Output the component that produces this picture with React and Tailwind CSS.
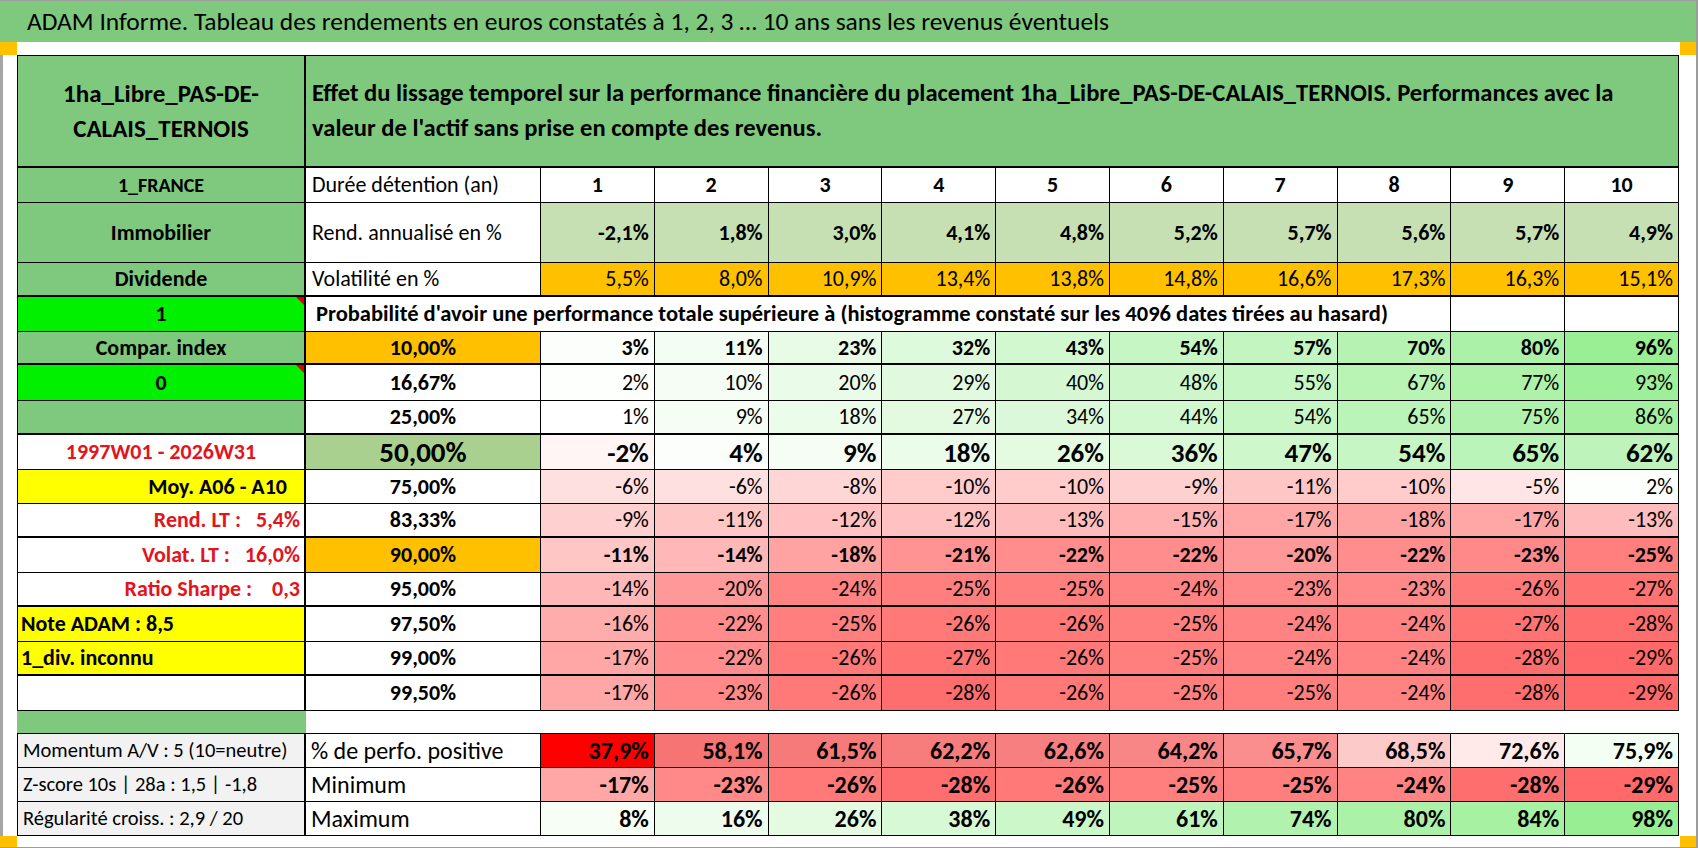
import React from 'react'

const probRows = [
  { p: '10,00%', pBg: 'bg-[#ffc000]', vals: [3, 11, 23, 32, 43, 54, 57, 70, 80, 96], kind: 'bold', thick: true },
  { p: '16,67%', vals: [2, 10, 20, 29, 40, 48, 55, 67, 77, 93] },
  { p: '25,00%', vals: [1, 9, 18, 27, 34, 44, 54, 65, 75, 86], thick: true },
  { p: '50,00%', pBg: 'bg-[#a9d08e]', vals: [-2, 4, 9, 18, 26, 36, 47, 54, 65, 62], kind: 'big' },
  { p: '75,00%', vals: [-6, -6, -8, -10, -10, -9, -11, -10, -5, 2] },
  { p: '83,33%', vals: [-9, -11, -12, -12, -13, -15, -17, -18, -17, -13], thick: true },
  { p: '90,00%', pBg: 'bg-[#ffc000]', vals: [-11, -14, -18, -21, -22, -22, -20, -22, -23, -25], kind: 'bold' },
  { p: '95,00%', vals: [-14, -20, -24, -25, -25, -24, -23, -23, -26, -27], thick: true },
  { p: '97,50%', vals: [-16, -22, -25, -26, -26, -25, -24, -24, -27, -28] },
  { p: '99,00%', vals: [-17, -22, -26, -27, -26, -25, -24, -24, -28, -29], thick: true },
  { p: '99,50%', vals: [-17, -23, -26, -28, -26, -25, -25, -24, -28, -29] },
]

// left column next to the probability rows
const sideCells = [
  { text: 'Compar. index', cls: 'bg-[#7fc97e] justify-center font-bold' },
  { text: '0', cls: 'bg-[#00f000] justify-center font-bold', flag: true },
  { text: '', cls: 'bg-[#7fc97e]' },
  { text: '1997W01 - 2026W31', cls: 'bg-white justify-center font-bold text-[#e3141c]' },
  { text: 'Moy. A06 - A10', cls: 'bg-[#ffff00] justify-end pr-[17px] font-bold' },
  { text: 'Rend. LT :   5,4%', cls: 'bg-white justify-end pr-[4px] font-bold text-[#e3141c]' },
  { text: 'Volat. LT :   16,0%', cls: 'bg-white justify-end pr-[4px] font-bold text-[#e3141c]' },
  { text: 'Ratio Sharpe :    0,3', cls: 'bg-white justify-end pr-[4px] font-bold text-[#e3141c]' },
  { text: 'Note ADAM : 8,5', cls: 'bg-[#ffff00] justify-start pl-[3px] font-bold' },
  { text: '1_div. inconnu', cls: 'bg-[#ffff00] justify-start pl-[3px] font-bold' },
  { text: '', cls: 'bg-white' },
]

const rendAnn = ['-2,1%', '1,8%', '3,0%', '4,1%', '4,8%', '5,2%', '5,7%', '5,6%', '5,7%', '4,9%']
const vola = ['5,5%', '8,0%', '10,9%', '13,4%', '13,8%', '14,8%', '16,6%', '17,3%', '16,3%', '15,1%']

const positive = [
  ['37,9%', '#ff0000'],
  ['58,1%', '#f67474'],
  ['61,5%', '#f77a7a'],
  ['62,2%', '#f77c7c'],
  ['62,6%', '#f87f7f'],
  ['64,2%', '#f98686'],
  ['65,7%', '#fa8e8e'],
  ['68,5%', '#fdcaca'],
  ['72,6%', '#ffe9e9'],
  ['75,9%', '#f3fff3'],
]
const minimum = [-17, -23, -26, -28, -26, -25, -25, -24, -28, -29]
const maximum = [8, 16, 26, 38, 49, 61, 74, 80, 84, 98]

function scale(v) {
  if (v >= 0) {
    const t = Math.min(v / 100, 1)
    return `rgb(${Math.round(255 - 105 * t)},${Math.round(255 - 17 * t)},${Math.round(255 - 110 * t)})`
  }
  const t = Math.min(-v / 29, 1)
  const c = Math.round(255 - 150 * t)
  return `rgb(255,${c},${c})`
}

function Cell({ className = '', style, children }) {
  return (
    <div
      className={`relative flex items-center overflow-hidden whitespace-pre border-black ${className}`}
      style={style}
    >
      {children}
    </div>
  )
}

function Flag() {
  return (
    <span className="absolute top-0 right-0 w-0 h-0 border-l-[8px] border-l-transparent border-t-[8px] border-t-[#e00000]" />
  )
}

export default function App() {
  return (
    <div className="w-[1698px] h-[848px] bg-white text-black overflow-hidden flex flex-col border-t border-r-2 border-[#9c9c9c] font-['Carlito','DejaVu_Sans_Condensed','Liberation_Sans',sans-serif]">
      {/* Title band */}
      <div className="h-[41px] shrink-0 bg-[#7fc97e] pl-[27px] flex items-center text-[25.5px] leading-none">
        ADAM Informe. Tableau des rendements en euros constatés à 1, 2, 3 … 10 ans sans les revenus éventuels
      </div>
      <div className="h-[13px] shrink-0 flex justify-between">
        <div className="w-[17px] bg-[#ffc000]" />
        <div className="w-[16px] bg-[#ffc000]" />
      </div>

      <div className="flex h-[781px] shrink-0">
        <div className="w-[17px] shrink-0 border-l-[3px] border-[#a6a6a6]" />
        <div className="w-[1662px] shrink-0 grid grid-cols-[289px_235px_repeat(10,minmax(0,1fr))] grid-rows-[113px_35px_60px_34px_35px_33px_36px_34px_35px_34px_34px_35px_34px_35px_34px_35px_22px_35px_34px_34px] text-[22px] leading-none">
          {/* Header */}
          <Cell className="border-l border-t border-r-2 border-b-2 bg-[#7fc97e] justify-center text-center text-[25px] font-bold leading-[35px] whitespace-normal">
            <span>
              1ha_Libre_PAS-DE-
              <br />
              CALAIS_TERNOIS
            </span>
          </Cell>
          <Cell className="col-span-11 border-t border-r border-b-2 bg-[#7fc97e] pl-[6px] text-[24.6px] font-bold leading-[35px] whitespace-normal">
            <span>
              Effet du lissage temporel sur la performance financière du placement 1ha_Libre_PAS-DE-CALAIS_TERNOIS. Performances avec la
              <br />
              valeur de l'actif sans prise en compte des revenus.
            </span>
          </Cell>

          {/* Durée */}
          <Cell className="border-l border-r-2 border-b bg-[#7fc97e] justify-center font-bold text-[20px]">1_FRANCE</Cell>
          <Cell className="border-r border-b pl-[6px]">Durée détention (an)</Cell>
          {Array.from({ length: 10 }, (_, i) => (
            <Cell key={i} className="border-r border-b justify-center font-bold">
              {i + 1}
            </Cell>
          ))}

          {/* Rendement */}
          <Cell className="border-l border-r-2 border-b bg-[#7fc97e] justify-center font-bold">Immobilier</Cell>
          <Cell className="border-r border-b pl-[6px]">Rend. annualisé en %</Cell>
          {rendAnn.map((v) => (
            <Cell key={v} className="border-r border-b justify-end pr-[5px] font-bold bg-[#c6e0b4]">
              {v}
            </Cell>
          ))}

          {/* Volatilité */}
          <Cell className="border-l border-r-2 border-b-2 bg-[#7fc97e] justify-center font-bold">Dividende</Cell>
          <Cell className="border-r border-b-2 pl-[6px]">Volatilité en %</Cell>
          {vola.map((v) => (
            <Cell key={v} className="border-r border-b-2 justify-end pr-[5px] bg-[#ffc000]">
              {v}
            </Cell>
          ))}

          {/* Probabilité title */}
          <Cell className="border-l border-r-2 border-b bg-[#00f000] justify-center font-bold">
            1
            <Flag />
          </Cell>
          <Cell className="col-span-9 border-r border-b pl-[10px] font-bold text-[22.5px]">
            Probabilité d'avoir une performance totale supérieure à (histogramme constaté sur les 4096 dates tirées au hasard)
          </Cell>
          <Cell className="border-r border-b" />
          <Cell className="border-r border-b" />

          {/* Probability rows */}
          {probRows.map((row, r) => {
            const side = sideCells[r]
            const bb = row.thick ? 'border-b-2' : 'border-b'
            const txt =
              row.kind === 'big' ? 'text-[27px] font-bold' : row.kind === 'bold' ? 'font-bold' : ''
            return (
              <React.Fragment key={row.p}>
                <Cell className={`border-l border-r-2 ${bb} ${side.cls}`}>
                  {side.text}
                  {side.flag && <Flag />}
                </Cell>
                <Cell
                  className={`border-r ${bb} justify-center font-bold ${row.kind === 'big' ? 'text-[29px]' : ''} ${row.pBg || ''}`}
                >
                  {row.p}
                </Cell>
                {row.vals.map((v, i) => (
                  <Cell
                    key={i}
                    className={`border-r ${bb} justify-end pr-[5px] ${txt}`}
                    style={{ backgroundColor: scale(v) }}
                  >
                    {v}%
                  </Cell>
                ))}
              </React.Fragment>
            )
          })}

          {/* Spacer */}
          <div className="bg-[#7fc97e]" />
          <div className="col-span-11" />

          {/* Summary rows */}
          <Cell className="border-l border-t border-r-2 border-b bg-[#f2f2f2] pl-[5px] text-[20.5px]">Momentum A/V : 5 (10=neutre)</Cell>
          <Cell className="border-t border-r border-b pl-[5px] text-[24px]">% de perfo. positive</Cell>
          {positive.map(([v, c]) => (
            <Cell
              key={v}
              className="border-t border-r border-b justify-end pr-[5px] text-[24px] font-bold"
              style={{ backgroundColor: c }}
            >
              {v}
            </Cell>
          ))}

          <Cell className="border-l border-r-2 border-b bg-[#f2f2f2] pl-[5px] text-[20.5px]">Z-score 10s | 28a : 1,5 | -1,8</Cell>
          <Cell className="border-r border-b pl-[5px] text-[24px]">Minimum</Cell>
          {minimum.map((v, i) => (
            <Cell
              key={i}
              className="border-r border-b justify-end pr-[5px] text-[24px] font-bold"
              style={{ backgroundColor: scale(v) }}
            >
              {v}%
            </Cell>
          ))}

          <Cell className="border-l border-r-2 border-b bg-[#f2f2f2] pl-[5px] text-[20.5px]">Régularité croiss. : 2,9 / 20</Cell>
          <Cell className="border-r border-b pl-[5px] text-[24px]">Maximum</Cell>
          {maximum.map((v, i) => (
            <Cell
              key={i}
              className="border-r border-b justify-end pr-[5px] text-[24px] font-bold"
              style={{ backgroundColor: scale(v) }}
            >
              {v}%
            </Cell>
          ))}
        </div>
        <div className="flex-1" />
      </div>

      <div className="h-[12px] shrink-0 flex justify-between border-b border-[#9c9c9c]">
        <div className="w-[17px] bg-[#ffc000]" />
        <div className="w-[16px] bg-[#ffc000]" />
      </div>
    </div>
  )
}
